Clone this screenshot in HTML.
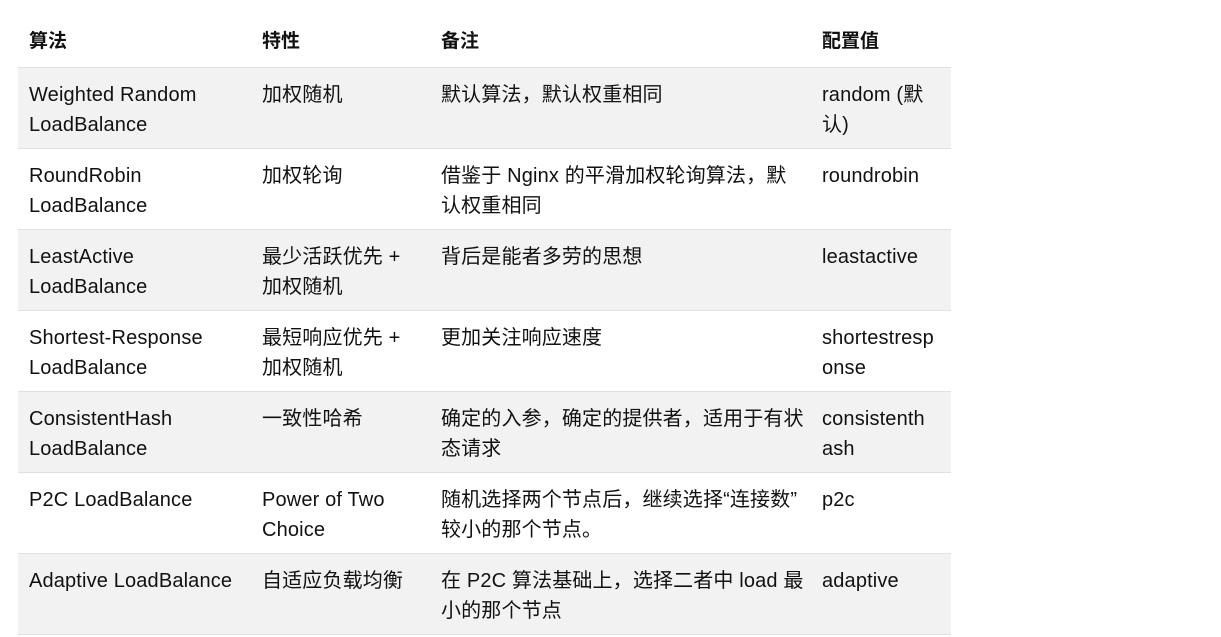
<!DOCTYPE html>
<html><head><meta charset="utf-8"><style>
html,body{margin:0;padding:0;background:#fff;width:1221px;height:637px;overflow:hidden}
body{font-family:"Liberation Sans","Noto Sans CJK SC",sans-serif;font-size:20px;color:#111}
table{position:absolute;left:18px;top:20px;border-collapse:collapse;width:933px;table-layout:fixed}
td,th{padding:12px 11px 0 11px;vertical-align:top;line-height:30px;white-space:nowrap;text-align:left;letter-spacing:0.15px}
th{height:40px;font-weight:bold;padding-top:7px;font-size:19px;letter-spacing:0}
tr.r td{height:68px;border-top:1px solid #e0e0e0}
tr.g td{background:#f2f2f2}
tr.last td{border-bottom:1px solid #e0e0e0}
</style></head><body>
<table>
<colgroup><col style="width:233px"><col style="width:179px"><col style="width:381px"><col style="width:140px"></colgroup>
<tr><th>算法</th><th>特性</th><th>备注</th><th>配置值</th></tr>
<tr class="r g"><td>Weighted Random<br>LoadBalance</td><td>加权随机</td><td>默认算法，默认权重相同</td><td>random (默<br>认)</td></tr>
<tr class="r"><td>RoundRobin<br>LoadBalance</td><td>加权轮询</td><td>借鉴于 Nginx 的平滑加权轮询算法，默<br>认权重相同</td><td>roundrobin</td></tr>
<tr class="r g"><td>LeastActive<br>LoadBalance</td><td>最少活跃优先 +<br>加权随机</td><td>背后是能者多劳的思想</td><td>leastactive</td></tr>
<tr class="r"><td>Shortest-Response<br>LoadBalance</td><td>最短响应优先 +<br>加权随机</td><td>更加关注响应速度</td><td>shortestresp<br>onse</td></tr>
<tr class="r g"><td>ConsistentHash<br>LoadBalance</td><td>一致性哈希</td><td>确定的入参，确定的提供者，适用于有状<br>态请求</td><td>consistenth<br>ash</td></tr>
<tr class="r"><td>P2C LoadBalance</td><td>Power of Two<br>Choice</td><td>随机选择两个节点后，继续选择“连接数”<br>较小的那个节点。</td><td>p2c</td></tr>
<tr class="r g last"><td>Adaptive LoadBalance</td><td>自适应负载均衡</td><td>在 P2C 算法基础上，选择二者中 load 最<br>小的那个节点</td><td>adaptive</td></tr>
</table>
</body></html>
